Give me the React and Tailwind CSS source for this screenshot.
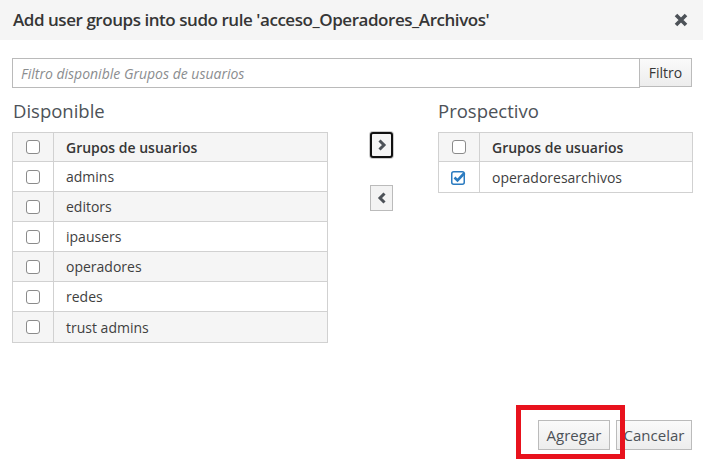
import React from 'react'

const font = { fontFamily: '"Open Sans", "Liberation Sans", sans-serif' }

const available = ['admins', 'editors', 'ipausers', 'operadores', 'redes', 'trust admins']
const prospective = [{ name: 'operadoresarchivos', checked: true }]

const Box = ({ checked }) =>
  checked ? (
    <svg width="16" height="15" viewBox="0 0 16 15">
      <rect x="0.75" y="1.75" width="12.5" height="12.5" rx="2" fill="white" stroke="#2b7bc0" strokeWidth="1.5" />
      <path d="M3.5 7.5 L6.5 10.5 L13.5 3" fill="none" stroke="#2b7bc0" strokeWidth="2.6" />
    </svg>
  ) : (
    <span className="block w-[14px] h-[14px] rounded-[3px] border border-[#8b8b8b] bg-white" />
  )

const GroupTable = ({ rows, width }) => (
  <div className={`${width} border border-[#d1d1d1] text-[14px] text-[#3f3f3f]`}>
    <div className="flex h-[29px] bg-[#f5f5f5] border-b border-[#d1d1d1] font-semibold text-[#363636]">
      <div className="w-[41px] flex items-center justify-center border-r border-[#d1d1d1]">
        <Box />
      </div>
      <div className="flex items-center pl-[12px]">Grupos de usuarios</div>
    </div>
    {rows.map((r, i) => (
      <div
        key={r.name}
        className={`flex h-[30px] ${i % 2 ? 'bg-[#f5f5f5]' : 'bg-white'} ${i < rows.length - 1 ? 'border-b border-[#d1d1d1]' : ''}`}
      >
        <div className="w-[41px] flex items-center justify-center border-r border-[#d1d1d1]">
          <Box checked={r.checked} />
        </div>
        <div className="flex items-center pl-[12px]">{r.name}</div>
      </div>
    ))}
  </div>
)

const Chevron = ({ dir }) => (
  <svg width="10" height="14" viewBox="0 0 10 14">
    <path
      d={dir === 'right' ? 'M2.5 2.5 L7 7 L2.5 11.5' : 'M7.5 2.5 L3 7 L7.5 11.5'}
      fill="none"
      stroke="#4d5258"
      strokeWidth="3"
    />
  </svg>
)

export default function App() {
  return (
    <div style={font} className="w-[703px] h-[462px] bg-white relative overflow-hidden">
      {/* header */}
      <div className="h-[40px] bg-[#f5f5f5] flex items-center justify-between pl-[13px] pr-[13px]">
        <h1 className="text-[17px] font-semibold text-[#363636] tracking-[-0.45px]">
          Add user groups into sudo rule 'acceso_Operadores_Archivos'
        </h1>
        <svg width="16" height="16" viewBox="0 0 16 16" className="mr-[1px]">
          <path d="M3 3 L13 13 M13 3 L3 13" stroke="#4d5258" strokeWidth="3.6" />
        </svg>
      </div>

      {/* filter */}
      <div className="flex mt-[18px] ml-[12px] mr-[11px] h-[30px]">
        <div className="flex-1 border border-[#bababa] flex items-center pl-[8px] text-[14px] italic text-[#8b8d8f]">
          Filtro disponible Grupos de usuarios
        </div>
        <button className="w-[52px] h-[29px] border border-[#bbb] border-l-0 bg-gradient-to-b from-[#fafafa] to-[#ededed] text-[14px] text-[#363636]">
          Filtro
        </button>
      </div>

      {/* lists */}
      <div className="flex mt-[10px] ml-[12px]">
        <div>
          <div className="text-[18.5px] text-[#4d5258] h-[34px] pl-[1px] leading-[26px]">Disponible</div>
          <GroupTable rows={available.map(n => ({ name: n }))} width="w-[316px]" />
        </div>
        <div className="flex flex-col ml-[42px] mt-[34px] gap-[27px]">
          <button className="w-[23px] h-[26px] rounded-[3px] border-2 border-[#111] bg-[#f5f5f5] flex items-center justify-center shadow-[0_0_0_1px_#ccc]">
            <Chevron dir="right" />
          </button>
          <button className="w-[23px] h-[26px] border border-[#bbb] bg-[#f3f3f3] flex items-center justify-center">
            <Chevron dir="left" />
          </button>
        </div>
        <div className="ml-[45px]">
          <div className="text-[18.5px] text-[#4d5258] h-[34px] leading-[26px]">Prospectivo</div>
          <GroupTable rows={prospective} width="w-[255px]" />
        </div>
      </div>

      {/* footer */}
      <div className="absolute right-[11px] bottom-[12px] flex gap-[6px]">
        <button className="h-[30px] w-[72px] border border-[#bbb] bg-gradient-to-b from-[#fafafa] to-[#ededed] text-[15px] text-[#4d5258]">
          Agregar
        </button>
        <button className="h-[30px] w-[76px] border border-[#bbb] bg-gradient-to-b from-[#fafafa] to-[#ededed] text-[15px] text-[#4d5258]">
          Cancelar
        </button>
      </div>

      {/* highlight overlay */}
      <div className="absolute left-[516px] top-[405px] w-[109px] h-[54px] border-[5px] border-[#e8121d]" />
    </div>
  )
}
